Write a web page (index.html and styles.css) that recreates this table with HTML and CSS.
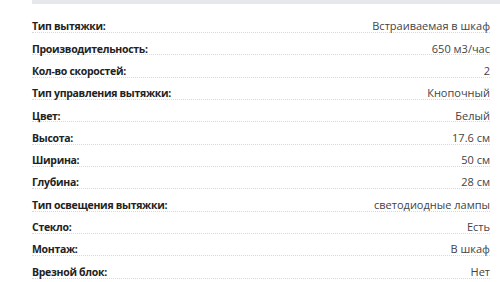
FILE: index.html
```html
<!DOCTYPE html>
<html lang="ru">
<head>
<meta charset="utf-8">
<link rel="stylesheet" href="styles.css">
</head>
<body>
<div class="page">
  <div class="topbar"></div>
  <div class="specs">
    <div class="row"><span class="label">Тип вытяжки:</span><span class="value">Встраиваемая в шкаф</span></div>
    <div class="row"><span class="label">Производительность:</span><span class="value">650 м3/час</span></div>
    <div class="row"><span class="label">Кол-во скоростей:</span><span class="value">2</span></div>
    <div class="row"><span class="label">Тип управления вытяжки:</span><span class="value">Кнопочный</span></div>
    <div class="row"><span class="label">Цвет:</span><span class="value">Белый</span></div>
    <div class="row"><span class="label">Высота:</span><span class="value">17.6 см</span></div>
    <div class="row"><span class="label">Ширина:</span><span class="value">50 см</span></div>
    <div class="row"><span class="label">Глубина:</span><span class="value">28 см</span></div>
    <div class="row"><span class="label">Тип освещения вытяжки:</span><span class="value">светодиодные лампы</span></div>
    <div class="row"><span class="label">Стекло:</span><span class="value">Есть</span></div>
    <div class="row"><span class="label">Монтаж:</span><span class="value">В шкаф</span></div>
    <div class="row"><span class="label">Врезной блок:</span><span class="value">Нет</span></div>
  </div>
</div>
</body>
</html>
```
FILE: styles.css
```css
html, body { margin: 0; padding: 0; background: #fff; }
body { font-family: "Open Sans", "Noto Sans", sans-serif; font-size: 11px; color: #333; }
.page { padding-left: 32px; }
.topbar { height: 4px; background: #e6e8ec; }
.specs { padding-right: 10px; padding-top: 6.6px; }
.row {
  display: flex;
  justify-content: space-between;
  align-items: baseline;
  height: 22.34px;
  box-sizing: border-box;
  padding-top: 7.6px;
  border-bottom: 1px dotted #d8d8d8;
  line-height: 15px;
}
.label { font-weight: 700; font-size: 10.5px; color: #222; letter-spacing: -0.3px; }
.value { color: #444; }
```
